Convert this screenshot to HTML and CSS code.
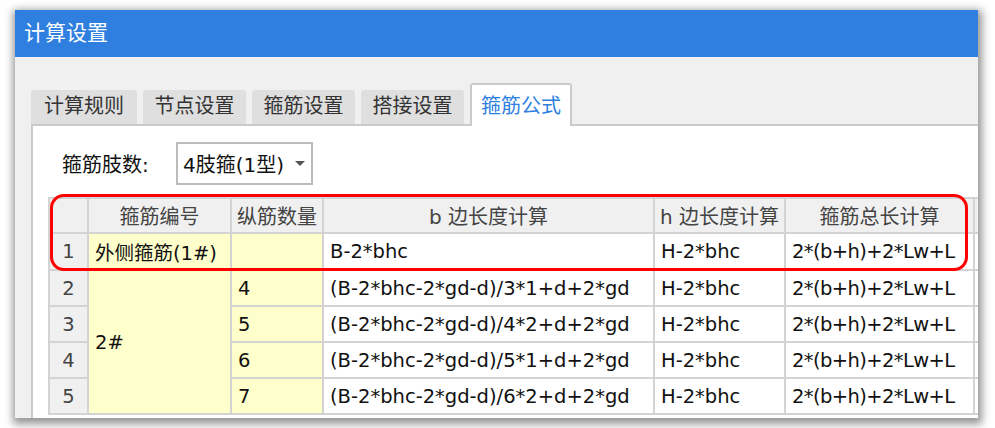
FILE: index.html
```html
<!DOCTYPE html>
<html lang="zh-CN">
<head>
<meta charset="utf-8">
<title>计算设置</title>
<link rel="stylesheet" href="styles.css">
</head>
<body>
<div class="window">
  <div class="titlebar">计算设置</div>
  <div class="tabs">
    <div class="tab tab-first">计算规则</div>
    <div class="tab">节点设置</div>
    <div class="tab">箍筋设置</div>
    <div class="tab">搭接设置</div>
    <div class="tab tab-active">箍筋公式</div>
  </div>
  <div class="panel">
    <div class="field">
      <span class="field-label">箍筋肢数:</span>
      <div class="select">
        <span class="select-text">4肢箍(1型)</span>
        <span class="caret"></span>
      </div>
    </div>
    <div class="grid-wrap">
      <table class="grid">
        <colgroup>
          <col class="c-num">
          <col class="c-id">
          <col class="c-qty">
          <col class="c-b">
          <col class="c-h">
          <col class="c-total">
          <col class="c-extra">
        </colgroup>
        <tr class="head">
          <th class="num"></th>
          <th>箍筋编号</th>
          <th>纵筋数量</th>
          <th>b 边长度计算</th>
          <th>h 边长度计算</th>
          <th>箍筋总长计算</th>
          <th></th>
        </tr>
        <tr class="first">
          <td class="num">1</td>
          <td class="yellow">外侧箍筋(1#)</td>
          <td class="yellow"></td>
          <td>B-2*bhc</td>
          <td>H-2*bhc</td>
          <td class="total">2*(b+h)+2*Lw+L</td>
          <td></td>
        </tr>
        <tr>
          <td class="num">2</td>
          <td class="yellow" rowspan="4">2#</td>
          <td class="yellow">4</td>
          <td>(B-2*bhc-2*gd-d)/3*1+d+2*gd</td>
          <td>H-2*bhc</td>
          <td class="total">2*(b+h)+2*Lw+L</td>
          <td></td>
        </tr>
        <tr>
          <td class="num">3</td>
          <td class="yellow">5</td>
          <td>(B-2*bhc-2*gd-d)/4*2+d+2*gd</td>
          <td>H-2*bhc</td>
          <td class="total">2*(b+h)+2*Lw+L</td>
          <td></td>
        </tr>
        <tr>
          <td class="num">4</td>
          <td class="yellow">6</td>
          <td>(B-2*bhc-2*gd-d)/5*1+d+2*gd</td>
          <td>H-2*bhc</td>
          <td class="total">2*(b+h)+2*Lw+L</td>
          <td></td>
        </tr>
        <tr>
          <td class="num">5</td>
          <td class="yellow">7</td>
          <td>(B-2*bhc-2*gd-d)/6*2+d+2*gd</td>
          <td>H-2*bhc</td>
          <td class="total">2*(b+h)+2*Lw+L</td>
          <td></td>
        </tr>
      </table>
      <div class="highlight"></div>
    </div>
  </div>
</div>
</body>
</html>
```
FILE: styles.css
```css
html, body {
  margin: 0;
  padding: 0;
  background: #ffffff;
  overflow: hidden;
}

body {
  width: 995px;
  height: 428px;
  font-family: "DejaVu Sans", "Noto Sans CJK SC", sans-serif;
  font-size: 20px;
  color: #111;
}

.window {
  margin: 10px 0 0 15px;
  width: 963px;
  height: 408px;
  background: #f0f0f0;
  box-shadow: 1px 3px 8px 3px rgba(0, 0, 0, 0.42);
  display: flex;
  flex-direction: column;
}

.titlebar {
  height: 47px;
  line-height: 46px;
  background: #2e7fe0;
  color: #ffffff;
  padding-left: 9px;
  font-size: 21px;
  flex: none;
}

.tabs {
  height: 67px;
  flex: none;
  display: flex;
  align-items: flex-end;
  gap: 6px;
  padding-left: 16px;
}

.tab {
  width: 103px;
  height: 34px;
  line-height: 33px;
  background: #dfdfdf;
  border-radius: 3px 3px 0 0;
  text-align: center;
  color: #333;
  box-sizing: border-box;
}

.tab-first {
  width: 106px;
}

.tab-active {
  width: 102px;
  height: 43px;
  line-height: 42px;
  margin-bottom: -2px;
  background: #ffffff;
  border: 2px solid #cacaca;
  border-bottom: none;
  color: #2e7fe0;
  position: relative;
  z-index: 1;
}

.panel {
  flex: 1;
  margin-left: 16px;
  background: #ffffff;
  border-left: 2px solid #cacaca;
  border-top: 2px solid #cacaca;
  padding: 16px 0 0 15px;
  overflow: hidden;
  min-height: 0;
}

.field {
  display: flex;
  align-items: center;
  height: 43px;
  padding-left: 14px;
}

.field-label {
  width: 114px;
  color: #111;
}

.select {
  width: 137px;
  height: 43px;
  box-sizing: border-box;
  border: 2px solid #bcbcbc;
  display: flex;
  align-items: center;
  padding-left: 5px;
}

.select-text {
  flex: 1;
  white-space: nowrap;
}

.caret {
  width: 0;
  height: 0;
  border-left: 5px solid transparent;
  border-right: 5px solid transparent;
  border-top: 5px solid #555;
  margin-right: 6px;
}

.grid-wrap {
  position: relative;
  margin-top: 12px;
}

.grid {
  border-collapse: collapse;
  table-layout: fixed;
  width: 985px;
}

.c-num { width: 39px; }
.c-id { width: 143px; }
.c-qty { width: 92px; }
.c-b { width: 331px; }
.c-h { width: 131px; }
.c-total { width: 189px; }
.c-extra { width: 60px; }

.grid th,
.grid td {
  border: 2px solid #d3d3d3;
  height: 34px;
  padding: 0 0 0 6px;
  white-space: nowrap;
  overflow: hidden;
  text-align: left;
}

.grid td {
  font-size: 19.5px;
}

.grid td.total {
  letter-spacing: -0.6px;
}

.grid th {
  background: #f0f0f0;
  font-weight: normal;
  color: #444;
  text-align: center;
  padding: 0;
  height: 33px;
}

.grid tr.first td {
  height: 35px;
}

.grid td.num {
  background: #f0f0f0;
  text-align: center;
  padding: 0;
  color: #444;
}

.grid td.yellow {
  background: #ffffcc;
}

.highlight {
  position: absolute;
  left: 2px;
  top: -3px;
  width: 918px;
  height: 77px;
  box-sizing: border-box;
  border: 3px solid #ff0000;
  border-radius: 14px;
  pointer-events: none;
}
```
